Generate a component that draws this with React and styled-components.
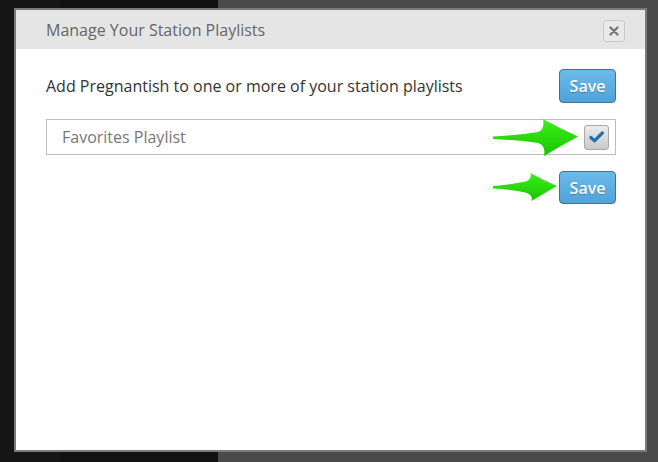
import React from 'react';
import styled, { createGlobalStyle } from 'styled-components';

const GlobalStyle = createGlobalStyle`
  html, body {
    margin: 0;
    padding: 0;
    background: #4a4a4a;
  }
  body {
    font-family: "Open Sans", "Liberation Sans", sans-serif;
  }
`;

const Page = styled.div`
  position: relative;
  width: 658px;
  height: 462px;
  overflow: hidden;
  display: flex;
`;

const SideCol = styled.div`
  width: ${(p) => p.w}px;
  flex: ${(p) => (p.w ? 'none' : '1')};
  background: ${(p) => p.bg};
`;

const Modal = styled.div`
  position: absolute;
  left: 14px;
  top: 8px;
  width: 633px;
  height: 444px;
  box-sizing: border-box;
  border: 2px solid #7a7a7a;
  background: #fff;
  display: flex;
  flex-direction: column;
`;

const Header = styled.div`
  height: 39px;
  background: #e5e5e5;
  display: flex;
  align-items: center;
  justify-content: space-between;
  padding: 0 20px 0 30px;
  box-sizing: border-box;
`;

const Title = styled.div`
  font-size: 16px;
  color: #666;
  margin-top: 1px;
`;

const CloseButton = styled.button`
  width: 22px;
  height: 22px;
  padding: 0;
  border: 1px solid #c9c9c9;
  border-radius: 3px;
  background: #e9e9e9;
  display: flex;
  align-items: center;
  justify-content: center;
  margin-top: 3px;
`;

const Body = styled.div`
  padding: 20px 29px 0 30px;
  display: flex;
  flex-direction: column;
  gap: 16px;
`;

const Row = styled.div`
  display: flex;
  align-items: center;
  justify-content: ${(p) => p.justify || 'space-between'};
`;

const Lead = styled.div`
  font-size: 16px;
  color: #333;
`;

const SaveButton = styled.button`
  width: 57px;
  height: ${(p) => p.h || 34}px;
  box-sizing: border-box;
  border: 1px solid #4a6e8c;
  border-radius: 4px;
  background: linear-gradient(#6bbbea, #4ea3da);
  color: #fff;
  font-family: "Open Sans", "Liberation Sans", sans-serif;
  font-size: 16px;
  font-weight: 600;
  text-shadow: 0 1px 1px rgba(0, 0, 0, 0.25);
  padding: 0;
`;

const PlaylistItem = styled.div`
  height: 36px;
  box-sizing: border-box;
  border: 1px solid #bdbdbd;
  display: flex;
  align-items: center;
  justify-content: space-between;
  padding: 0 6px 0 15px;
`;

const ItemLabel = styled.div`
  font-size: 16px;
  color: #777;
`;

const Check = styled.div`
  width: 25px;
  height: 25px;
  box-sizing: border-box;
  border: 1px solid #a9a9a9;
  border-radius: 3px;
  background: linear-gradient(#ececec, #c9c9c9);
  display: flex;
  align-items: center;
  justify-content: center;
`;

const Arrow = styled.svg`
  position: absolute;
  left: ${(p) => p.x}px;
  top: ${(p) => p.y}px;
  overflow: visible;
`;

// annotation arrow: thin tapering tail, swept head
const ArrowShape = ({ x, y, len, head, gradId }) => {
  const m = head / 2;
  const back = len * 0.6;
  return (
    <Arrow x={x} y={y} width={len} height={head} viewBox={`0 0 ${len} ${head}`}>
      <defs>
        <linearGradient id={gradId} x1="0" y1="0" x2="0" y2="1">
          <stop offset="0" stopColor="#3df01a" />
          <stop offset="1" stopColor="#17c400" />
        </linearGradient>
      </defs>
      <path
        d={`M0 ${m - 1}
           Q ${len * 0.3} ${m - 2.5} ${back - 6} ${m - 5.5}
           Q ${back + 1} ${m - 8} ${back - 1} 0
           Q ${len * 0.8} ${m * 0.55} ${len} ${m - 1}
           Q ${len * 0.8} ${m * 1.45} ${back} ${head}
           Q ${back + 2} ${m + 8} ${back - 6} ${m + 5.5}
           Q ${len * 0.3} ${m + 2.5} 0 ${m + 1.5}
           Z`}
        fill={`url(#${gradId})`}
      />
    </Arrow>
  );
};

export default function App() {
  return (
    <Page>
      <GlobalStyle />
      <SideCol w={60} bg="#151515" />
      <SideCol w={158} bg="#111" />
      <SideCol bg="#4a4a4a" />
      <Modal>
        <Header>
          <Title>Manage Your Station Playlists</Title>
          <CloseButton aria-label="Close">
            <svg width="10" height="10" viewBox="0 0 10 10">
              <path d="M1.5 1.5 L8.5 8.5 M8.5 1.5 L1.5 8.5" stroke="#777" strokeWidth="2.4" strokeLinecap="round" />
            </svg>
          </CloseButton>
        </Header>
        <Body>
          <Row>
            <Lead>Add Pregnantish to one or more of your station playlists</Lead>
            <SaveButton>Save</SaveButton>
          </Row>
          <PlaylistItem>
            <ItemLabel>Favorites Playlist</ItemLabel>
            <Check>
              <svg width="15" height="12" viewBox="0 0 15 12">
                <path d="M1.8 6.5 L5.5 9.8 L13.3 2" fill="none" stroke="#2370b0" strokeWidth="3.2" strokeLinecap="round" strokeLinejoin="round" />
              </svg>
            </Check>
          </PlaylistItem>
          <Row justify="flex-end">
            <SaveButton h={33}>Save</SaveButton>
          </Row>
        </Body>
      </Modal>
      <ArrowShape x={493} y={119} len={85} head={37} gradId="g1" />
      <ArrowShape x={493} y={173} len={64} head={28} gradId="g2" />
    </Page>
  );
}
